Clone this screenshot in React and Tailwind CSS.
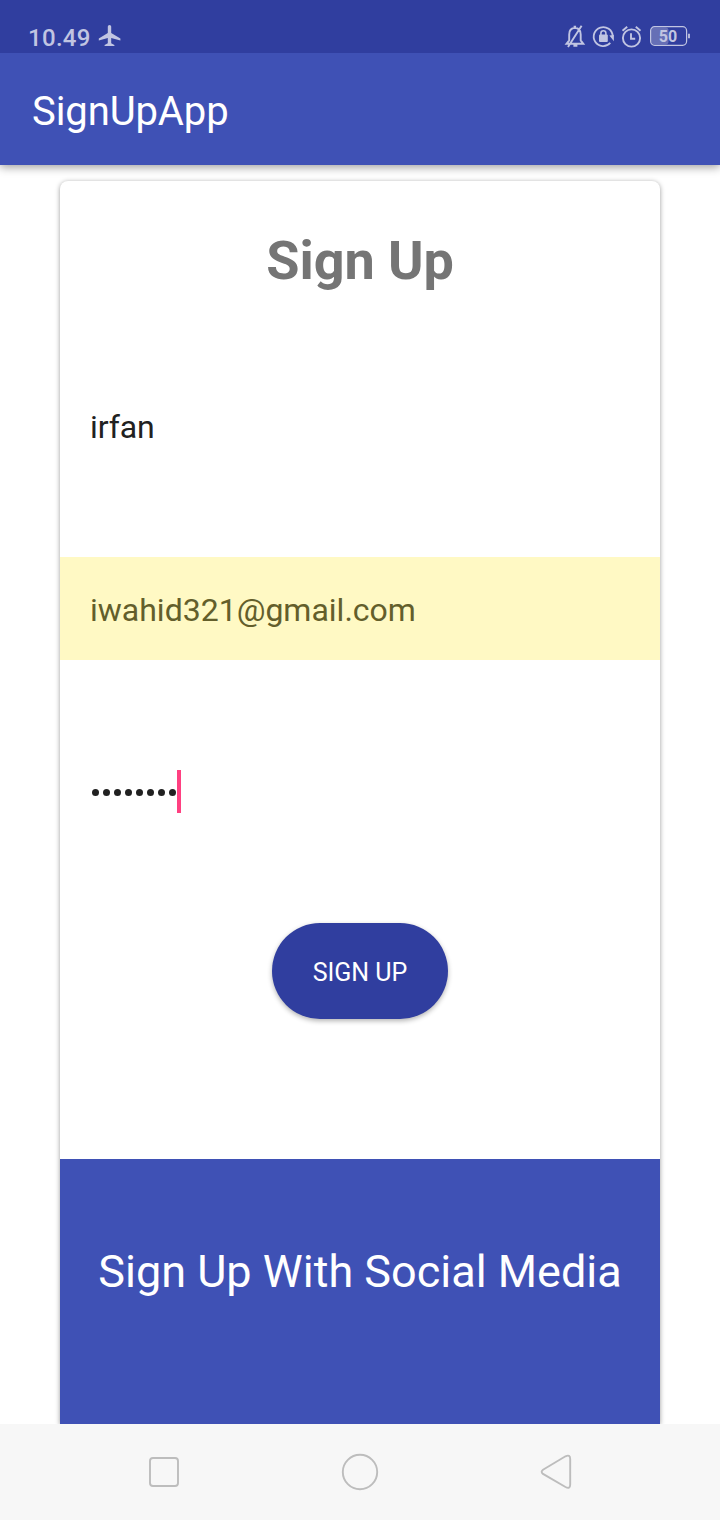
function StatusBar() {
  return (
    <div className="relative z-20 flex h-[53px] items-start bg-[#303e9f] pl-7 pr-[30px] text-[#c1c5e2]">
      <span className="mt-[22px] w-[70px] whitespace-nowrap text-2xl leading-8 font-medium tracking-[0.3px]">10.49</span>
      <svg className="mt-6 h-6 w-6" viewBox="0 0 24 24" fill="currentColor">
        <path d="M9.8 2.6Q9.8 1 11.5 1T13.2 2.6V9L22.4 14.6V16.6L13.2 14V19.3L16.4 21V22H6.6V21L9.8 19.3V14L.8 16.6V14.6L9.8 9Z" />
      </svg>
      <div className="ml-auto mt-6 flex">
        <svg className="h-6 w-[126px]" viewBox="0 0 126 24" fill="none" stroke="currentColor" strokeWidth="1.9">
          <path d="M2.5 19.8H19.3L16.7 16.4V10.4Q16.7 4.4 10.9 3.8Q5.2 4.4 5.2 10.4V16.4L2.5 19.8ZM9.6 2.8H12.1M9.4 21.8H13.4M17.6 1.7L4 23" />
          <path d="M46.3 18.9A9.5 9.5 0 1 1 48.7 12.2" strokeWidth="1.8" />
          <path d="M45.4 11.6L49.9 11V17.2Z" fill="currentColor" stroke="none" />
          <rect x="35" y="10.6" width="8.8" height="7.4" rx="1" fill="currentColor" stroke="none" />
          <path d="M36.9 11.6V9.2A2.5 2.5 0 0 1 41.9 9.2V11.6" strokeWidth="1.6" />
          <circle cx="67.5" cy="14" r="8.6" />
          <path d="M67 9.2V14.7H71.2M58.5 6.7L63.2 2.8M71.8 2.8L76.5 6.7" />
          <rect x="87" y="3.5" width="17.5" height="17" rx="3" fill="#666fb6" stroke="none" />
          <rect x="86.6" y="2.7" width="36" height="18.6" rx="4" strokeWidth="1.2" />
          <path d="M125 9.8V14.2" strokeWidth="1.8" />
          <text x="104" y="18" textAnchor="middle" fill="currentColor" stroke="none" fontSize="16" fontWeight="700">50</text>
        </svg>
      </div>
    </div>
  );
}

function SignUpCard() {
  return (
    <section className="mx-[60px] mt-4 flex h-[1243px] flex-col rounded-t-lg bg-white shadow-[0_1px_5px_rgba(0,0,0,0.4)]">
      <h2 className="mt-12 text-center text-[54px] leading-16 font-bold tracking-[-0.1px] text-[#757575]">Sign Up</h2>
      <div className="mt-[83px] h-[102px] px-[30px] text-[32px] leading-[102px] tracking-[-0.1px] text-[#212121]">irfan</div>
      <div className="mt-[79px] h-[103px] bg-[#fff9c4] px-[30px] text-[32px] leading-[106px] text-[#635e2b]">iwahid321@gmail.com</div>
      <div className="mt-[80px] flex h-[103px] items-center px-[30px]">
        <div className="flex h-[43px] w-[87px] items-center gap-1 pl-0.5 pt-0.5">
          {Array.from({ length: 8 }, (_, i) => (
            <span key={i} className="h-[7px] w-[7px] shrink-0 rounded-full bg-[#212121]" />
          ))}
        </div>
        <span className="h-[43px] w-1 bg-[#ff4081]" />
      </div>
      <button className="mx-auto mt-[80px] h-24 w-44 rounded-full bg-[#303e9f] pt-[3px] text-[25px] text-white shadow-[0_2px_5px_rgba(0,0,0,0.3)]">SIGN UP</button>
      <div className="mt-[140px] flex-1 bg-[#3f51b5] pt-[81px] text-center text-[45px] leading-16 text-white">Sign Up With Social Media</div>
    </section>
  );
}

function NavigationBar() {
  return (
    <nav className="relative flex h-24 items-center bg-[#f7f7f7]">
      <svg className="h-24 w-[720px]" viewBox="0 0 720 96" fill="none" stroke="#bdbdbd" strokeWidth="1.9">
        <rect x="150" y="34" width="28" height="28" rx="3" />
        <circle cx="360" cy="48" r="17.2" />
        <path d="M543 45.7L565.5 32.3Q570.2 30.1 570.2 35V60.4Q570.2 65.5 565.5 63L543 49.9Q540.3 47.8 543 45.7Z" />
      </svg>
    </nav>
  );
}

export default function App() {
  return (
    <main className="flex h-[1520px] w-[720px] flex-col overflow-hidden bg-white font-['Roboto',sans-serif]">
      <StatusBar />
      <header className="relative z-10 h-28 bg-[#3f51b5] pl-8 pt-0.5 text-[40px] leading-[114px] tracking-[-0.1px] text-white shadow-[0_2px_9px_rgba(0,0,0,0.4)]">SignUpApp</header>
      <SignUpCard />
      <NavigationBar />
    </main>
  );
}
